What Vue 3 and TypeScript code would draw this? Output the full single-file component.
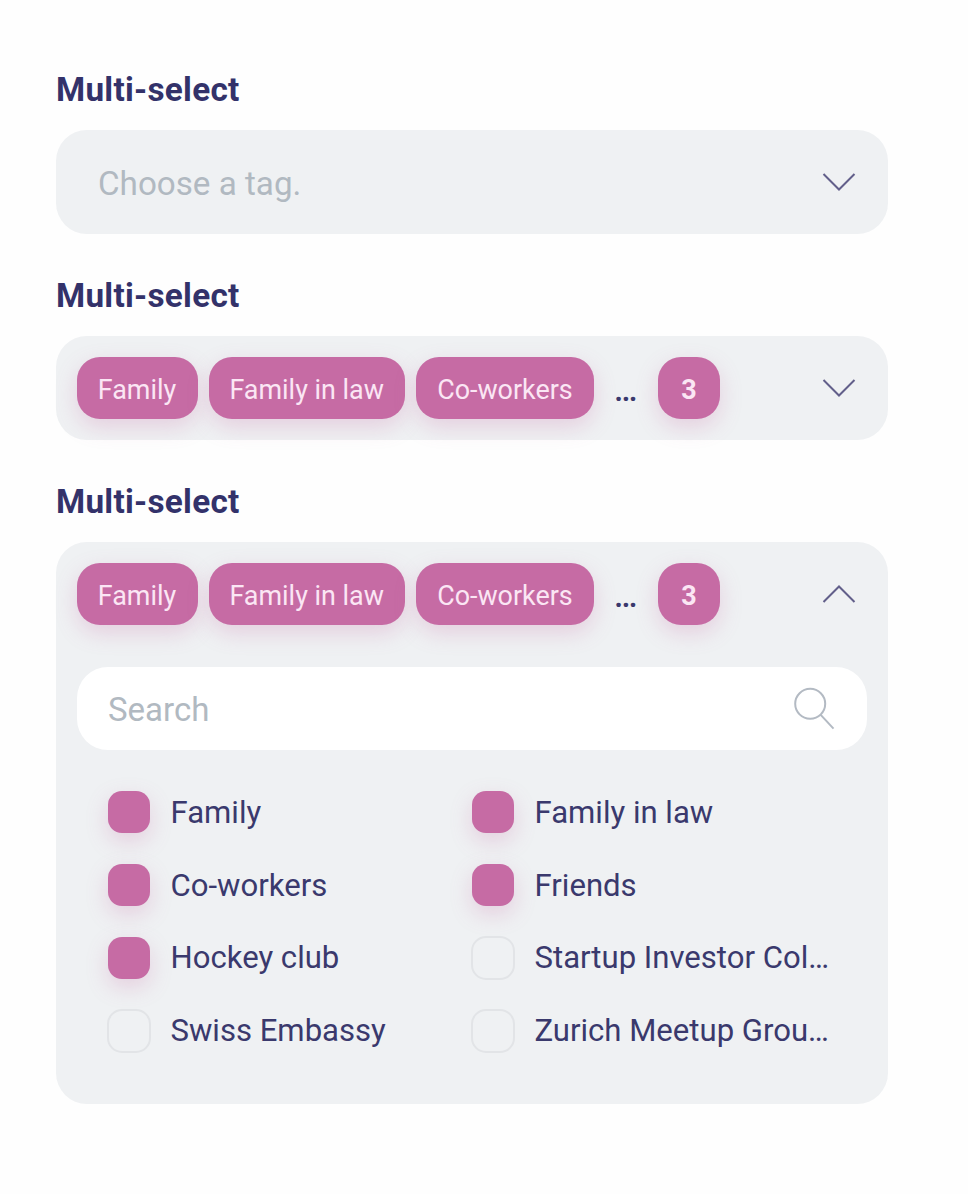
<script setup lang="ts">
import { computed, ref } from 'vue'

interface Option {
  name: string
  checked: boolean
}

interface Field {
  id: string
  empty: boolean
  open: boolean
}

const fields = ref<Field[]>([
  { id: 'empty', empty: true, open: false },
  { id: 'filled', empty: false, open: false },
  { id: 'expanded', empty: false, open: true },
])

const tags: string[] = ['Family', 'Family in law', 'Co-workers']
const overflowCount = 3
const query = ref('')

const options = ref<Option[]>([
  { name: 'Family', checked: true },
  { name: 'Family in law', checked: true },
  { name: 'Co-workers', checked: true },
  { name: 'Friends', checked: true },
  { name: 'Hockey club', checked: true },
  { name: 'Startup Investor Col…', checked: false },
  { name: 'Swiss Embassy', checked: false },
  { name: 'Zurich Meetup Grou…', checked: false },
])

const visibleOptions = computed(() =>
  options.value.filter((o) => o.name.toLowerCase().includes(query.value.toLowerCase())),
)
</script>

<template>
  <main class="page">
    <section v-for="field in fields" :key="field.id" class="field">
      <h2 class="label">Multi-select</h2>
      <div class="box">
        <div class="control" @click="field.open = !field.open">
          <span v-if="field.empty" class="placeholder">Choose a tag.</span>
          <div v-else class="tags">
            <span v-for="tag in tags" :key="tag" class="tag">{{ tag }}</span>
            <span class="more">…</span>
            <span class="tag count">{{ overflowCount }}</span>
          </div>
          <svg class="chevron" width="36" height="22" viewBox="0 0 36 22">
            <path :d="field.open ? 'M2.5 19 L18 3.5 L33.5 19' : 'M2.5 3 L18 18.5 L33.5 3'" />
          </svg>
        </div>
        <div v-if="field.open" class="panel">
          <label class="search">
            <input v-model="query" type="text" placeholder="Search" />
            <svg class="glass" width="42" height="44" viewBox="0 0 42 44">
              <circle cx="17.2" cy="16.8" r="15" />
              <path d="M27.5 27.6 L40.5 41.6" />
            </svg>
          </label>
          <ul class="options">
            <li
              v-for="option in visibleOptions"
              :key="option.name"
              class="option"
              @click="option.checked = !option.checked"
            >
              <span class="check" :class="{ on: option.checked }"></span>
              <span class="name">{{ option.name }}</span>
            </li>
          </ul>
        </div>
      </div>
    </section>
  </main>
</template>

<style>
body {
  margin: 0;
  background: #fefefe;
}
</style>

<style scoped>
.page {
  box-sizing: border-box;
  width: 968px;
  min-height: 1194px;
  padding: 68px 80px 0 56px;
  font-family: Roboto, sans-serif;
  color: #3a396d;
}

.field {
  margin-bottom: 40px;
}

.label {
  margin: 0 0 18px;
  font-size: 33.3px;
  line-height: 44px;
  font-weight: 700;
  letter-spacing: 0.27px;
  color: #33326a;
}

.box {
  border-radius: 31px;
  background: #eff1f3;
}

.control {
  box-sizing: border-box;
  display: flex;
  align-items: center;
  justify-content: space-between;
  height: 104px;
  padding: 0 31px 0 21px;
  cursor: pointer;
}

.placeholder {
  padding: 3px 0 0 21px;
  font-size: 33.2px;
  line-height: 40px;
  color: #b1b9c1;
}

.tags {
  display: flex;
  align-items: center;
}

.tag {
  box-sizing: border-box;
  height: 62px;
  margin-right: 11px;
  padding: 0 21.4px 0 20.8px;
  border-radius: 23px;
  background: #c66ba4;
  box-shadow: 0 8px 21px rgba(198, 107, 164, 0.25);
  font-size: 26.9px;
  line-height: 66px;
  color: #fbe6f4;
  white-space: nowrap;
}

.more {
  box-sizing: border-box;
  width: 42px;
  height: 62px;
  margin-right: 11px;
  padding: 2px 0 0 9px;
  font-size: 33px;
  line-height: 62px;
  font-weight: 500;
}

.count {
  width: 62px;
  margin-right: 0;
  padding: 0;
  text-align: center;
  font-weight: 700;
}

.chevron {
  flex: none;
  fill: none;
  stroke: #625f8a;
  stroke-width: 2;
}

.panel {
  padding: 21px 21px 37px;
}

.search {
  box-sizing: border-box;
  display: flex;
  align-items: center;
  justify-content: space-between;
  height: 83px;
  padding: 0 32px 0 31px;
  border-radius: 31px;
  background: #fff;
}

.search input {
  flex: 1;
  min-width: 0;
  height: 44px;
  margin: 0;
  padding: 1px 0 0;
  border: 0;
  outline: 0;
  background: transparent;
  font: 33px Roboto, sans-serif;
  color: #34346a;
}

.search input::placeholder {
  color: #b1b9c1;
  opacity: 1;
}

.glass {
  flex: none;
  fill: none;
  stroke: #b3bac3;
  stroke-width: 2;
}

.options {
  display: grid;
  grid-template-columns: 364px 364px;
  margin: 0;
  padding: 26px 0 0 30px;
  list-style: none;
}

.option {
  display: flex;
  align-items: center;
  height: 72.8px;
  cursor: pointer;
}

.check {
  box-sizing: border-box;
  flex: none;
  width: 44px;
  height: 44px;
  border: 2px solid #e2e4e7;
  border-radius: 15px;
}

.check.on {
  width: 42px;
  height: 42px;
  margin: 0 1px;
  border: 0;
  border-radius: 14px;
  background: #c66ba4;
  box-shadow: 0 8px 21px rgba(198, 107, 164, 0.25);
}

.name {
  margin-left: 19.5px;
  padding-top: 1px;
  font-size: 31.1px;
  line-height: 40px;
  white-space: nowrap;
}
</style>
